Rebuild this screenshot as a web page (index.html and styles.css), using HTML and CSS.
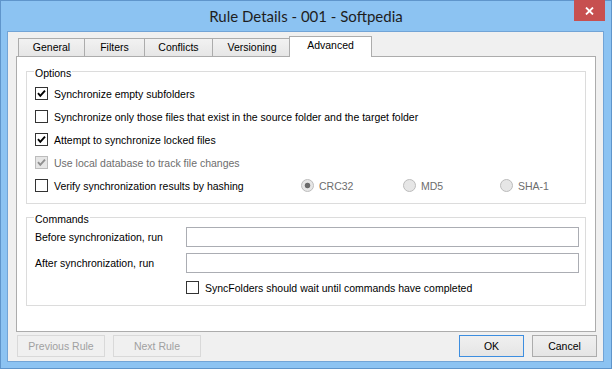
FILE: index.html
```html
<!DOCTYPE html>
<html lang="en">
<head>
    <meta charset="UTF-8">
    <title>Rule Details - 001 - Softpedia</title>
    <link rel="stylesheet" href="styles.css">
</head>
<body>
    <div class="window">
        <div class="titlebar">
            <span class="title">Rule Details - 001 - Softpedia</span>
            <span class="close">
                <svg width="9" height="8" viewBox="0 0 9 8"><path d="M1 0.5 L8 7.5 M8 0.5 L1 7.5" stroke="#fff" stroke-width="1.8"/></svg>
            </span>
        </div>

        <div class="client">
            <div class="tabs">
                <div class="tab tab-general">General</div>
                <div class="tab tab-filters">Filters</div>
                <div class="tab tab-conflicts">Conflicts</div>
                <div class="tab tab-versioning">Versioning</div>
                <div class="tab active">Advanced</div>
            </div>

            <div class="panel">
                <fieldset class="group options">
                    <legend>Options</legend>
                    <div class="row">
                        <span class="check checked"><svg viewBox="0 0 11 11"><path d="M2 5.2 L4.3 7.8 L9 2.6"/></svg></span>
                        <span>Synchronize empty subfolders</span>
                    </div>
                    <div class="row">
                        <span class="check"></span>
                        <span>Synchronize only those files that exist in the source folder and the target folder</span>
                    </div>
                    <div class="row">
                        <span class="check checked"><svg viewBox="0 0 11 11"><path d="M2 5.2 L4.3 7.8 L9 2.6"/></svg></span>
                        <span>Attempt to synchronize locked files</span>
                    </div>
                    <div class="row disabled">
                        <span class="check checked"><svg viewBox="0 0 11 11"><path d="M2 5.2 L4.3 7.8 L9 2.6"/></svg></span>
                        <span>Use local database to track file changes</span>
                    </div>
                    <div class="row hash-row">
                        <div class="cell">
                            <span class="check"></span>
                            <span>Verify synchronization results by hashing</span>
                        </div>
                        <div class="cell disabled"><span class="radio selected"></span>CRC32</div>
                        <div class="cell disabled"><span class="radio"></span>MD5</div>
                        <div class="cell disabled"><span class="radio"></span>SHA-1</div>
                    </div>
                </fieldset>

                <fieldset class="group commands">
                    <legend>Commands</legend>
                    <div class="cmd-grid">
                        <label for="cmd-before">Before synchronization, run</label>
                        <input type="text" id="cmd-before">
                        <label for="cmd-after">After synchronization, run</label>
                        <input type="text" id="cmd-after">
                        <div class="row wait">
                            <span class="check"></span>
                            <span>SyncFolders should wait until commands have completed</span>
                        </div>
                    </div>
                </fieldset>
            </div>

            <div class="buttons">
                <button class="btn wide" disabled>Previous Rule</button>
                <button class="btn wide" disabled>Next Rule</button>
                <span class="spacer"></span>
                <button class="btn default">OK</button>
                <button class="btn">Cancel</button>
            </div>
        </div>
    </div>
</body>
</html>
```

FILE: styles.css
```css
body {
    margin: 0;
    font-family: "Liberation Sans", Arial, sans-serif;
    font-size: 10.5px;
    color: #000;
}
.window {
    width: 612px;
    height: 369px;
    box-sizing: border-box;
    background-color: #8cc3f2;
    border: 1px solid #5f95cb;
}
.titlebar {
    height: 30px;
    display: grid;
    grid-template-columns: 1fr auto 1fr;
}
.title {
    grid-column: 2;
    font-family: Lato, "Open Sans", sans-serif;
    font-size: 15px;
    line-height: 30px;
    color: #1e1e1e;
}
.close {
    grid-column: 3;
    justify-self: end;
    width: 31px;
    height: 21px;
    margin-top: -1px;
    margin-right: 6px;
    background-color: #c75050;
    display: flex;
    align-items: center;
    justify-content: center;
}
.client {
    height: 331px;
    box-sizing: border-box;
    margin: 0 7px 0 6px;
    border: 1px solid #72a4d6;
    background-color: #f0f0f0;
    padding: 4px 7px 0 8px;
}

/* tabs */
.tabs {
    display: flex;
    align-items: flex-end;
    height: 21px;
    padding-left: 2px;
    margin-bottom: -1px;
    position: relative;
    z-index: 1;
}
.tab {
    box-sizing: border-box;
    height: 19px;
    border: 1px solid #acacac;
    background: linear-gradient(#f2f2f2, #e6e6e6);
    text-align: center;
    line-height: 17px;
    margin-left: -1px;
}
.tab-general {
    width: 67px;
    margin-left: 0;
}
.tab-filters {
    width: 61px;
}
.tab-conflicts {
    width: 69px;
}
.tab-versioning {
    width: 80px;
}
.tab.active {
    width: 83px;
    height: 21px;
    margin-left: -3px;
    background: #fff;
    border-bottom: none;
    line-height: 17px;
}

/* panel + groups */
.panel {
    height: 276px;
    box-sizing: border-box;
    border: 1px solid #acacac;
    background-color: #fff;
    padding: 5px 9px 0;
}
fieldset.group {
    margin: 0;
    min-width: 0;
    border: 1px solid #dcdcdc;
    padding: 2px 7px 6px 8px;
}
legend {
    padding: 4px 1px 0;
    margin-left: -1px;
    line-height: 14px;
}
.commands {
    margin-top: 4px !important;
}
.commands.group {
    padding-top: 1px;
    padding-bottom: 9px;
}
.row {
    display: flex;
    align-items: center;
    height: 23px;
}
.check {
    flex: none;
    width: 13px;
    height: 13px;
    box-sizing: border-box;
    border: 1px solid #333;
    background-color: #fff;
    margin-right: 6px;
    display: flex;
}
.check svg {
    width: 11px;
    height: 11px;
}
.check path {
    fill: none;
    stroke: #000;
    stroke-width: 1.9;
}
.disabled {
    color: #6d6d6d;
}
.disabled .check {
    border-color: #bcbcbc;
    background-color: #e6e6e6;
}
.disabled .check path {
    stroke: #8f8f8f;
}
.hash-row {
    display: grid;
    grid-template-columns: 266px 102px 97px auto;
}
.cell {
    display: flex;
    align-items: center;
}
.radio {
    flex: none;
    width: 13px;
    height: 13px;
    box-sizing: border-box;
    border: 1px solid #bcbcbc;
    border-radius: 50%;
    background-color: #e6e6e6;
    margin-right: 5px;
}
.radio.selected {
    background: radial-gradient(circle, #6a6a6a 0, #6a6a6a 2.4px, #e6e6e6 3.2px);
}

/* commands */
.cmd-grid {
    display: grid;
    grid-template-columns: 151px 393px;
    row-gap: 6px;
    align-items: center;
}
.cmd-grid input {
    height: 20px;
    box-sizing: border-box;
    border: 1px solid #abadb3;
    margin: 0;
    padding: 0 3px;
    font: inherit;
}
.wait {
    grid-column: 2;
    height: 17px;
}

/* bottom buttons */
.buttons {
    display: flex;
    gap: 8px;
    margin: 3px -1px 0 0;
    padding-left: 1px;
}
.spacer {
    flex: 1;
}
.btn {
    width: 65px;
    height: 22px;
    box-sizing: border-box;
    border: 1px solid #acacac;
    background: linear-gradient(#f0f0f0, #e5e5e5);
    font-family: inherit;
    font-size: 10.5px;
    color: #000;
    padding: 0;
}
.btn.wide {
    width: 88px;
}
.btn:disabled {
    background: #f0f0f0;
    border-color: #d9d9d9;
    color: #a0a0a0;
}
.btn.default {
    border-color: #3d8ee0;
}
```
